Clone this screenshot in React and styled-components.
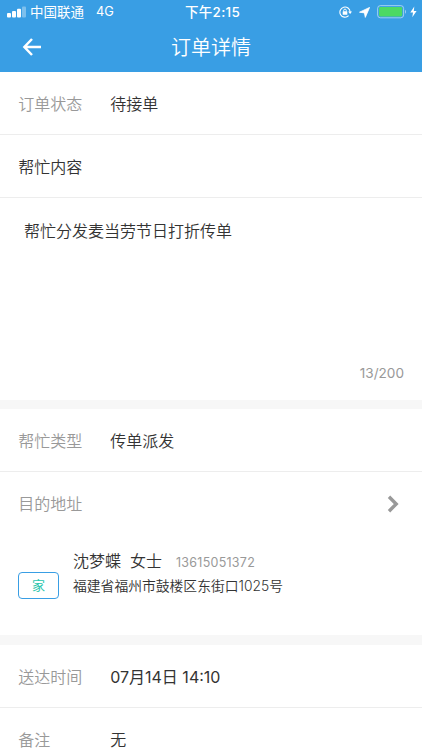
import styled, { createGlobalStyle } from "styled-components";

export default function App() {
  return (
    <>
      <GlobalStyle />
      <Tela>
        <Topo>
          <BarraStatus>
            <Operadora>
              <Sinal />
              <span>中国联通</span>
              <Rede>4G</Rede>
            </Operadora>
            <Hora>下午2:15</Hora>
            <Indicadores>
              <Trava />
              <Localizacao />
              <Bateria />
              <Raio />
            </Indicadores>
          </BarraStatus>
          <Navegacao>
            <BotaoVoltar aria-label="返回">
              <svg width="20" height="18" viewBox="0 0 20 18">
                <path
                  d="M10 1 L2.4 9 L10 17 M2 9 H19"
                  fill="none"
                  stroke="#fff"
                  strokeWidth="2.5"
                />
              </svg>
            </BotaoVoltar>
            <Titulo>订单详情</Titulo>
          </Navegacao>
        </Topo>

        <Linha $borda>
          <Rotulo>订单状态</Rotulo>
          <Valor>待接单</Valor>
        </Linha>
        <Linha $borda>
          <Valor>帮忙内容</Valor>
        </Linha>
        <Conteudo>
          <Descricao>帮忙分发麦当劳节日打折传单</Descricao>
          <Contador>13/200</Contador>
        </Conteudo>

        <Separador $altura={9} />

        <Linha $borda>
          <Rotulo>帮忙类型</Rotulo>
          <Valor>传单派发</Valor>
        </Linha>
        <Linha>
          <Rotulo>目的地址</Rotulo>
          <Seta width="12" height="18" viewBox="0 0 12 18">
            <path
              d="M2 1.8 L9.2 9 L2 16.2"
              fill="none"
              stroke="#999"
              strokeWidth="3.4"
            />
          </Seta>
        </Linha>
        <Endereco>
          <Etiqueta>家</Etiqueta>
          <Dados>
            <Contato>
              <span>沈梦蝶</span>
              <span>女士</span>
              <Telefone>13615051372</Telefone>
            </Contato>
            <Rua>福建省福州市鼓楼区东街口1025号</Rua>
          </Dados>
        </Endereco>

        <Separador $altura={10} />

        <Linha $borda>
          <Rotulo>送达时间</Rotulo>
          <Valor $peso={400}>07月14日 14:10</Valor>
        </Linha>
        <Linha>
          <Rotulo>备注</Rotulo>
          <Valor>无</Valor>
        </Linha>
      </Tela>
    </>
  );
}

function Sinal() {
  return (
    <svg width="19" height="12" viewBox="0 0 19 12" fill="#fff">
      <rect x="0" y="7" width="4" height="4.5" rx="1" />
      <rect x="5" y="5" width="4" height="6.5" rx="1" />
      <rect x="10" y="2.7" width="4" height="8.8" rx="1" />
      <rect x="15" y="0.5" width="4" height="11" rx="1" opacity="0.35" />
    </svg>
  );
}

function Trava() {
  return (
    <svg width="13" height="12" viewBox="0 0 13 12" fill="none" stroke="#fff">
      <path d="M9.6 9.7 A5.1 5.1 0 1 1 11.1 6" strokeWidth="1.1" />
      <path d="M9.2 5.4 H13 L11.1 8 Z" fill="#fff" stroke="none" />
      <rect x="3.7" y="5.3" width="4.6" height="3.5" rx="0.4" fill="#fff" stroke="none" />
      <path d="M4.7 5.5 V4.4 A1.3 1.3 0 0 1 7.3 4.4 V5.5" strokeWidth="0.9" />
    </svg>
  );
}

function Localizacao() {
  return (
    <svg width="11" height="11" viewBox="0 0 11 11" fill="#fff">
      <path d="M10.6 0.4 L6.3 10.4 L5.4 5.9 L0.5 5.2 Z" stroke="#fff" strokeWidth="0.8" />
    </svg>
  );
}

function Bateria() {
  return (
    <svg width="30" height="14" viewBox="0 0 30 14">
      <rect x="0.6" y="0.6" width="26" height="12.2" rx="2.8" fill="none" stroke="#fff" strokeOpacity="0.5" strokeWidth="1" />
      <rect x="2" y="2" width="23.2" height="9.4" rx="1.4" fill="#4cd964" />
      <path d="M28 4.7 C29.4 5.2 29.4 8.2 28 8.8 Z" fill="#fff" fillOpacity="0.5" />
    </svg>
  );
}

function Raio() {
  return (
    <svg width="7" height="12" viewBox="0 0 7 12" fill="#fff">
      <path d="M4.3 0.5 L0.3 6.6 H3 L2.3 11.3 L6.6 4.9 H3.8 Z" />
    </svg>
  );
}

const GlobalStyle = createGlobalStyle`
  * {
    box-sizing: border-box;
  }
  body {
    margin: 0;
    background-color: #fff;
    font-family: Inter, "Noto Sans CJK SC", sans-serif;
    font-weight: 350;
    color: #333;
    overflow: hidden;
  }
`;

const Tela = styled.div`
  width: 100%;
  height: 750px;
  overflow: hidden;
  display: flex;
  flex-direction: column;
  > * {
    flex-shrink: 0;
  }
`;

const Topo = styled.header`
  height: 72px;
  background-color: #399ee4;
  color: #fff;
`;

const BarraStatus = styled.div`
  height: 24px;
  padding: 0 5px 0 7px;
  display: grid;
  grid-template-columns: 1fr auto 1fr;
  align-items: center;
  font-size: 13.5px;
  font-weight: 400;
  line-height: 24px;
`;

const Operadora = styled.div`
  display: flex;
  align-items: center;
  gap: 4px;
`;

const Rede = styled.span`
  margin-left: 8px;
  font-size: 12.8px;
`;

const Hora = styled.div`
  padding-left: 1px;
  font-size: 13.5px;
  font-weight: 500;
  letter-spacing: 0.3px;
`;

const Indicadores = styled.div`
  display: flex;
  align-items: center;
  justify-content: flex-end;
  svg {
    margin-left: 7px;
  }
  svg:last-child {
    margin-left: 3px;
  }
`;

const Navegacao = styled.div`
  height: 48px;
  padding: 0 22px 2px;
  display: grid;
  grid-template-columns: 1fr auto 1fr;
  align-items: center;
`;

const BotaoVoltar = styled.button`
  width: 20px;
  height: 18px;
  padding: 0;
  border: none;
  background: none;
  display: flex;
`;

const Titulo = styled.h1`
  margin: 0;
  padding-top: 2px;
  font-size: 20px;
  font-weight: 350;
  line-height: 44px;
`;

const Linha = styled.div`
  height: ${({ $borda }) => ($borda ? "63px" : "62px")};
  padding: 2px 23px 0 18.2px;
  display: flex;
  align-items: center;
  border-bottom: ${({ $borda }) => ($borda ? "1px solid #ededed" : "none")};
  font-size: 16px;
  line-height: 24px;
`;

const Rotulo = styled.span`
  width: 92px;
  color: #999;
`;

const Valor = styled.span`
  font-weight: ${({ $peso }) => $peso || 350};
  color: #333;
`;

const Seta = styled.svg`
  margin-left: auto;
`;

const Conteudo = styled.div`
  height: 202px;
  padding: 21px 18px 15px 24px;
  display: flex;
  flex-direction: column;
  justify-content: space-between;
  line-height: 24px;
`;

const Descricao = styled.p`
  margin: 0;
  font-size: 16px;
`;

const Contador = styled.span`
  align-self: flex-end;
  font-size: 13.6px;
  font-weight: 400;
  color: #999;
`;

const Separador = styled.div`
  height: ${({ $altura }) => $altura}px;
  background-color: #f7f7f7;
`;

const Endereco = styled.div`
  height: 101px;
  padding: 15px 18px 0;
  display: flex;
  align-items: flex-start;
`;

const Etiqueta = styled.span`
  width: 41px;
  height: 27px;
  margin-top: 23px;
  border: 1px solid #399ee4;
  border-radius: 4px;
  color: #2bc6ad;
  font-size: 13px;
  font-weight: 400;
  line-height: 25px;
  text-align: center;
`;

const Dados = styled.div`
  margin-left: 14px;
`;

const Contato = styled.div`
  display: flex;
  align-items: baseline;
  gap: 9px;
  font-size: 16px;
  line-height: 25px;
`;

const Telefone = styled.span`
  margin-left: 5px;
  font-size: 12.5px;
  font-weight: 400;
  letter-spacing: 0.25px;
  color: #999;
`;

const Rua = styled.div`
  font-size: 13.8px;
  line-height: 23px;
`;
